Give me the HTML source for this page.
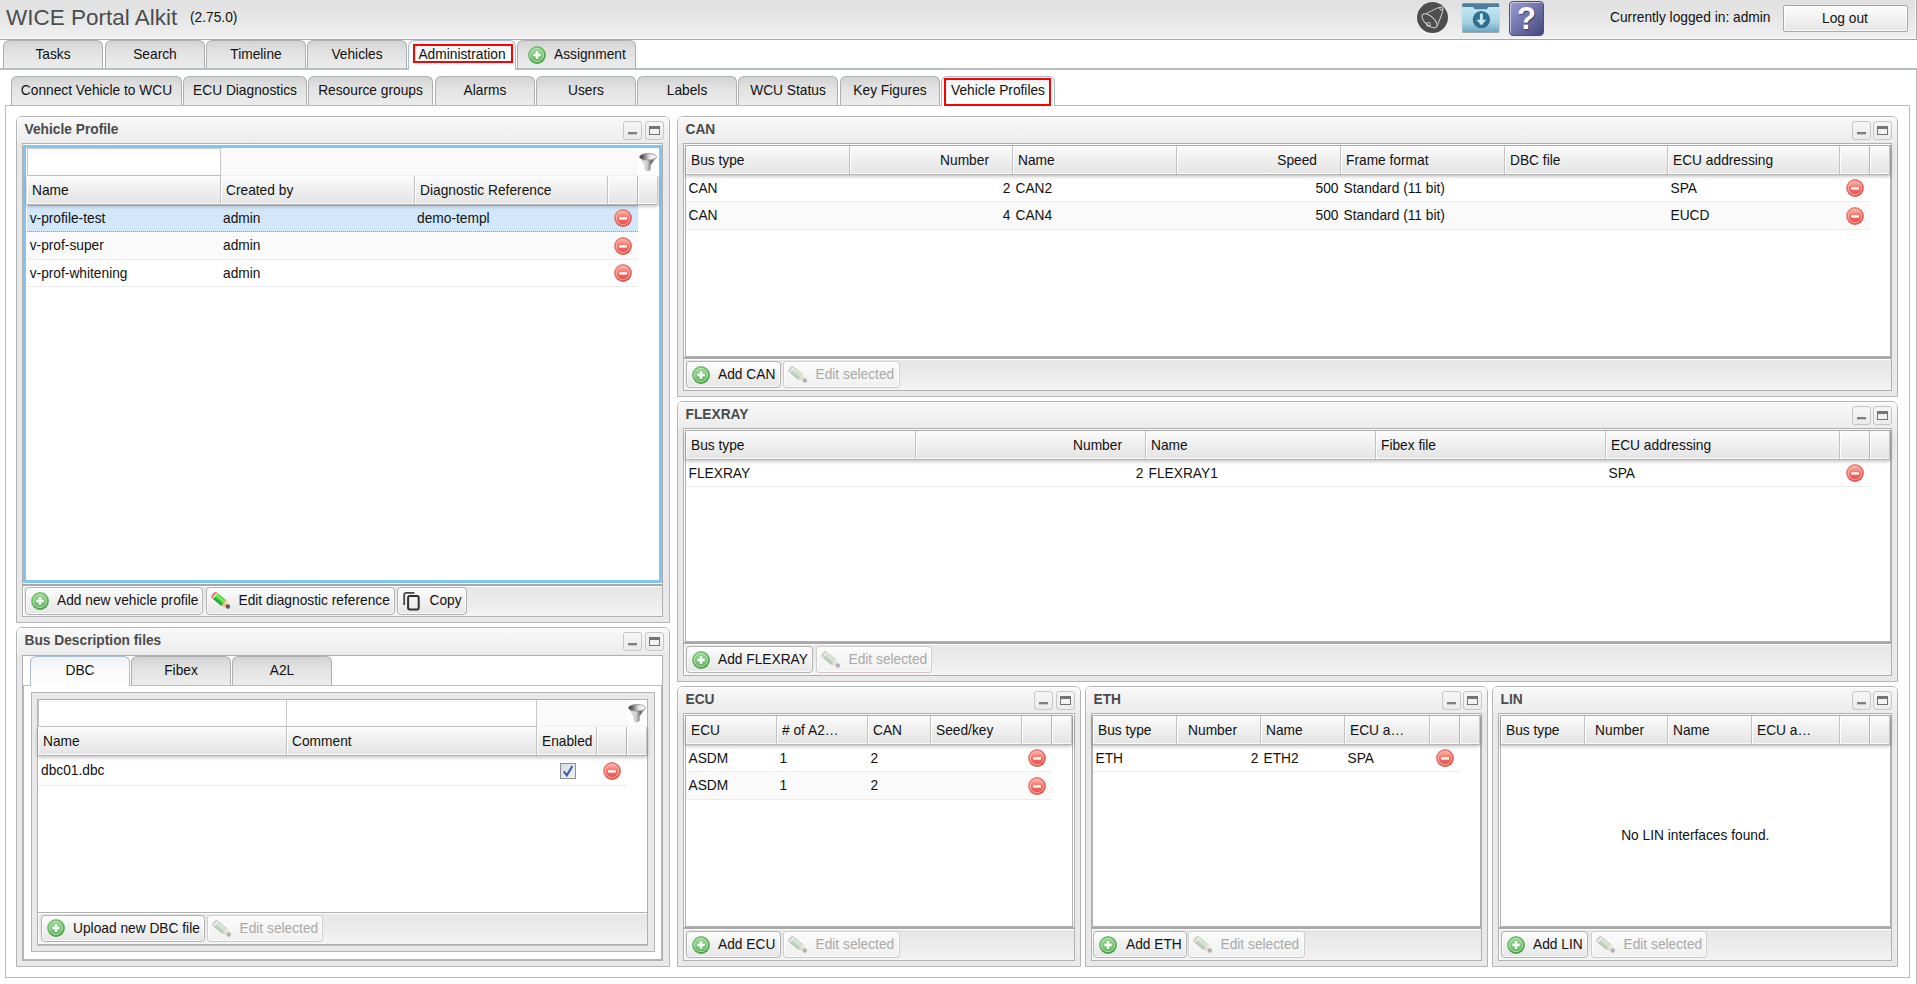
<!DOCTYPE html>
<html lang="en"><head><meta charset="utf-8"><title>WICE Portal Alkit</title>
<style>
*{box-sizing:content-box;margin:0;padding:0}
html,body{width:1917px;height:984px;overflow:hidden;background:#fff}
body{font-family:"Liberation Sans",Arial,Helvetica,sans-serif;font-size:13.75px;line-height:16px;color:#111;position:relative}
div,svg,i,span{position:absolute;display:block}
.t{white-space:pre;height:16px;line-height:16px;z-index:3}
.dt{color:#a9a9a9}
.capt{font-weight:bold;color:#4a4b4c}
.hdr{left:0;top:0;width:1916px;height:39px;background:linear-gradient(#e0e0e0,#e6e6e6 45%,#f1f1f1);border-bottom:1px solid #a8a8a8;border-right:1px solid #a8a8a8;box-shadow:inset -1px -1px 0 #f9f9f9}
.tab{height:28px;border:1px solid #adafb1;border-bottom:0;border-radius:6px 6px 0 0;background:linear-gradient(#d3d3d3,#e2e2e2 40%,#ececec)}
.tab.on{background:linear-gradient(#eff2f4,#fbfbfb 55%,#fff);border-color:#a9bdd0;height:29px}
.panel{border:1px solid #b4b4b4;border-radius:6px 6px 0 0;background:#e9e9e9}
.cap{background:linear-gradient(#f8f8f8,#ececec);border-radius:5px 5px 0 0;box-shadow:inset 0 1px 0 #fff,inset 1px 0 0 #f6f6f6}
.mm{width:17px;height:17px;border:1px solid #c6c6c6;border-radius:3px;background:linear-gradient(#f6f6f6,#ebebeb)}
.btn{border:1px solid #b2b2b2;border-radius:4px;background:linear-gradient(#fdfdfd,#f1f1f1 50%,#e6e6e6);box-shadow:inset 0 0 0 1px rgba(255,255,255,.7)}
.btn.dis{border-color:#d4d0d0 #d4cfcf #d8c4c4;background:linear-gradient(#fbfbfb,#f0f0f0)}
.th{z-index:1;height:27px;background:linear-gradient(#fcfcfc,#f0f0f0 45%,#e5e5e5);box-shadow:0 1px 0 #b4b4b4,0 2px 4px rgba(0,0,0,.30),inset 1px 0 0 #fff;border-bottom:1px solid #fbfbfb}
.sep{z-index:2;width:1px;height:28px;background:#c2c2c2;border-right:1px solid #fff}
.row{background:#fff;border-bottom:1px solid #ececec}
.row.odd{background:#fafafa}
.row.sel{background:#d3e7fb;border-bottom:1px dotted #6f9fdc;box-shadow:inset 0 1px 0 rgba(120,150,200,.35)}
.cbox{border:1px solid #b0b0b0;background:#fff}
.tbar{background:linear-gradient(#e6e6e6,#ececec 60%,#f4f4f4);border-top:2px solid #a8a8a8;box-shadow:inset 0 1px 0 #fff,inset 1px 0 0 #fff}
.tblb{border:1px solid #b0b0b0;background:#fff}
.fld{border:1px solid #c8c8c8;border-top-color:#d2d2d2;background:linear-gradient(#f4f4f4,#fff 3px)}
.ic{overflow:visible}
</style></head>
<body>
<div class="hdr"></div>
<div class="t" style="left:6px;top:5px;font-size:22.5px;line-height:26px;height:26px;color:#494e51">WICE Portal Alkit</div>
<div class="t" style="left:190px;top:10px;">(2.75.0)</div>
<div class="t" style="left:1610px;top:10px;">Currently logged in: admin</div>
<div class="btn" style="left:1783px;top:5px;width:123px;height:25px;border-radius:2px;border-color:#a8a8a8"></div>
<div class="t" style="left:1645px;width:400px;text-align:center;top:11px;">Log out</div>
<svg class="ic" style="left:1416px;top:1px" width="34" height="34" viewBox="0 0 34 34"><circle cx="16.5" cy="16.6" r="16.1" fill="#fff" opacity="0.55"/><circle cx="16.5" cy="16.6" r="15.5" fill="#4d4d4d"/><g fill="none" stroke="#cdcdcd" stroke-width="1.05" stroke-linecap="round"><ellipse cx="13.5" cy="19.8" rx="9.3" ry="4.5" transform="rotate(41 13.5 19.8)"/><path d="M10.6 12.4 C14.5 10.6 19.5 7.2 24.2 6.2"/><path d="M21.4 25.0 C22.4 20.5 26.2 14.5 26.9 8.2"/><circle cx="25.3" cy="7.4" r="1.5"/><circle cx="12.4" cy="23.4" r="1.9"/></g></svg>
<svg class="ic" style="left:1461px;top:2px" width="40" height="32" viewBox="0 0 40 32"><defs><linearGradient id="fo1" x1="0" y1="0" x2="0" y2="1"><stop offset="0" stop-color="#c4e6f3"/><stop offset="0.6" stop-color="#a5d3e5"/><stop offset="1" stop-color="#6fa6bd"/></linearGradient></defs><path d="M2.4 1.2 h34.6 a1.2 1.2 0 0 1 1.2 1.2 V8 H1.2 V2.4 a1.2 1.2 0 0 1 1.2 -1.2z" fill="#4b7f9c"/><path d="M1 5 H11.5 q1 0 1.3 1 q0.4 1.3 1.8 1.3 H25 q1.4 0 1.8 -1.3 q0.3 -1 1.3 -1 H38.6 q0.8 0 0.7 0.8 L38.4 29.2 q-0.1 1 -1.1 1 H2.4 q-1 0 -1.1 -1 L0.3 5.8 Q0.2 5 1 5z" fill="url(#fo1)"/><rect x="1.6" y="29.6" width="36.4" height="1.4" fill="#8e9aa0" opacity="0.7"/><circle cx="20.4" cy="17.6" r="8.7" fill="#2f6f8f"/><path d="M18.9 11.6 h3 v6.2 h3.4 l-4.9 5.6 l-4.9 -5.6 h3.4z" fill="#c6e8f4"/></svg>
<div style="left:1509px;top:1px;width:33px;height:33px;border-radius:4px;border:1px solid #4a4c86;background:linear-gradient(135deg,#9a9cd0,#7476ae 45%,#45477f);box-shadow:inset 1px 1px 0 rgba(255,255,255,.55)"></div>
<div class="t" style="left:1509px;top:1px;width:35px;height:35px;line-height:35px;text-align:center;font-weight:bold;font-size:31px;color:#fff;text-shadow:1px 1px 1px rgba(30,30,80,.6)">?</div>
<div style="left:0;top:68px;width:1917px;height:2px;background:#b7bdc2"></div>
<div class="tab" style="left:3px;top:40px;width:98px;height:27px"></div>
<div class="t" style="left:-147.0px;width:400px;text-align:center;top:47px;">Tasks</div>
<div class="tab" style="left:105px;top:40px;width:98px;height:27px"></div>
<div class="t" style="left:-45.0px;width:400px;text-align:center;top:47px;">Search</div>
<div class="tab" style="left:206px;top:40px;width:98px;height:27px"></div>
<div class="t" style="left:56.0px;width:400px;text-align:center;top:47px;">Timeline</div>
<div class="tab" style="left:307px;top:40px;width:98px;height:27px"></div>
<div class="t" style="left:157.0px;width:400px;text-align:center;top:47px;">Vehicles</div>
<div class="tab on" style="left:408px;top:40px;width:106px"></div>
<div class="t" style="left:262.0px;width:400px;text-align:center;top:47px;">Administration</div>
<div style="left:413px;top:44px;width:96px;height:15px;border:2px solid #f00"></div>
<div class="tab" style="left:517px;top:40px;width:117px;height:27px"></div>
<svg class="ic" style="left:528px;top:46px" width="18" height="18" viewBox="0 0 18 18"><defs><linearGradient id="gp23" x1="0.2" y1="0" x2="0.8" y2="1"><stop offset="0" stop-color="#7ec87a"/><stop offset="1" stop-color="#3f9a3e"/></linearGradient><linearGradient id="gq23" x1="0" y1="0" x2="0" y2="1"><stop offset="0" stop-color="#9ad896"/><stop offset="1" stop-color="#62b65e"/></linearGradient></defs><circle cx="9" cy="9" r="8.9" fill="url(#gp23)"/><circle cx="9" cy="9" r="6.7" fill="url(#gq23)" stroke="#d8f2d4" stroke-opacity="0.75" stroke-width="0.9"/><path d="M9 5.3v7.4M5.3 9h7.4" stroke="#fff" stroke-width="2.5"/></svg>
<div class="t" style="left:554px;top:47px;">Assignment</div>
<div style="left:1916px;top:70px;width:1px;height:914px;background:#b4b8bb"></div>
<div style="left:5px;top:105px;width:1903px;height:871px;border:1px solid #b8babc;background:#fff"></div>
<div class="tab" style="left:11px;top:76px;width:169px"></div>
<div class="t" style="left:-103.5px;width:400px;text-align:center;top:83px;">Connect Vehicle to WCU</div>
<div class="tab" style="left:183px;top:76px;width:122px"></div>
<div class="t" style="left:45.0px;width:400px;text-align:center;top:83px;">ECU Diagnostics</div>
<div class="tab" style="left:308px;top:76px;width:123px"></div>
<div class="t" style="left:170.5px;width:400px;text-align:center;top:83px;">Resource groups</div>
<div class="tab" style="left:435px;top:76px;width:98px"></div>
<div class="t" style="left:285.0px;width:400px;text-align:center;top:83px;">Alarms</div>
<div class="tab" style="left:536px;top:76px;width:98px"></div>
<div class="t" style="left:386.0px;width:400px;text-align:center;top:83px;">Users</div>
<div class="tab" style="left:637px;top:76px;width:98px"></div>
<div class="t" style="left:487.0px;width:400px;text-align:center;top:83px;">Labels</div>
<div class="tab" style="left:738px;top:76px;width:98px"></div>
<div class="t" style="left:588.0px;width:400px;text-align:center;top:83px;">WCU Status</div>
<div class="tab" style="left:840px;top:76px;width:98px"></div>
<div class="t" style="left:690.0px;width:400px;text-align:center;top:83px;">Key Figures</div>
<div class="tab on" style="left:941px;top:76px;width:112px"></div>
<div class="t" style="left:798.0px;width:400px;text-align:center;top:83px;">Vehicle Profiles</div>
<div style="left:944px;top:78px;width:103px;height:24px;border:2px solid #f00"></div>
<div class="panel" style="left:16px;top:116px;width:652px;height:505px;"></div>
<div class="cap" style="left:17px;top:117px;width:652px;height:26px"></div>
<div class="t capt" style="left:24.5px;top:122px;">Vehicle Profile</div>
<div class="mm" style="left:623px;top:121px"><i style="left:4px;top:10px;width:9px;height:2px;background:#7e7e7e;box-shadow:0 1px 0 rgba(126,126,126,.35)"></i></div>
<div class="mm" style="left:645px;top:121px"><i style="left:3px;top:4px;width:9px;height:5px;border:1px solid #727272;border-top:3px solid #747474;background:#f2f2f2"></i></div>
<div class="cbox" style="left:22px;top:143px;width:639px;height:472px;"></div>
<div style="left:23px;top:145px;width:633px;height:432px;border:3px solid #80c6f0;background:#fff"></div>
<div style="left:26px;top:148px;width:612px;height:28px;background:#fafafa"></div>
<div class="fld" style="left:27px;top:148px;width:192px;height:26px"></div>
<div style="left:638px;top:148px;width:21px;height:28px;background:#fff"></div>
<svg class="ic" style="left:639px;top:153px" width="18" height="18" viewBox="0 0 18 18"><defs><linearGradient id="fg56" x1="0" x2="1"><stop offset="0" stop-color="#f4f4f4"/><stop offset="0.45" stop-color="#d0d0d0"/><stop offset="0.7" stop-color="#6c6c6c"/><stop offset="1" stop-color="#8a8a8a"/></linearGradient><linearGradient id="fh56" x1="0" x2="1"><stop offset="0" stop-color="#2e2e2e"/><stop offset="0.25" stop-color="#707070"/><stop offset="0.6" stop-color="#e4e4e4"/><stop offset="1" stop-color="#fdfdfd"/></linearGradient></defs><path d="M0.8 4.2 L6.3 12.4 V16.2 Q6.6 17.8 9 17.8 Q11.2 17.8 11.4 16.4 V12.4 L17.2 4.2 Z" fill="url(#fg56)" stroke="#9a9a9a" stroke-width="0.5"/><ellipse cx="9" cy="3.8" rx="8.5" ry="3.3" fill="url(#fh56)" stroke="#8c8c8c" stroke-width="0.8"/></svg>
<div class="th" style="left:27px;top:176px;width:631px"></div>
<div class="t" style="left:32px;top:183px;width:187px;overflow:hidden;text-overflow:ellipsis;white-space:nowrap;">Name</div>
<div class="sep" style="left:220px;top:176px"></div>
<div class="t" style="left:226px;top:183px;width:187px;overflow:hidden;text-overflow:ellipsis;white-space:nowrap;">Created by</div>
<div class="sep" style="left:414px;top:176px"></div>
<div class="t" style="left:420px;top:183px;width:186px;overflow:hidden;text-overflow:ellipsis;white-space:nowrap;">Diagnostic Reference</div>
<div class="sep" style="left:607px;top:176px"></div>
<div class="sep" style="left:637px;top:176px;background:#b4b4b4"></div>
<div class="sep" style="left:657px;top:176px;border-right:0;background:#c8c8c8"></div>
<div class="row sel" style="left:27px;top:205px;width:611px;height:26px"></div>
<div class="row odd" style="left:27px;top:232px;width:611px;height:27px"></div>
<div class="row" style="left:27px;top:260px;width:611px;height:26px"></div>
<div class="t" style="left:29.7px;top:211px;">v-profile-test</div>
<div class="t" style="left:223px;top:211px;">admin</div>
<div class="t" style="left:417px;top:211px;">demo-templ</div>
<svg class="ic" style="left:614px;top:209px" width="18" height="18" viewBox="0 0 18 18"><defs><linearGradient id="gm72" x1="0.2" y1="0" x2="0.8" y2="1"><stop offset="0" stop-color="#f08680"/><stop offset="1" stop-color="#dc4e48"/></linearGradient><linearGradient id="gn72" x1="0" y1="0" x2="0" y2="1"><stop offset="0" stop-color="#ffb2a2"/><stop offset="0.5" stop-color="#f66e64"/><stop offset="1" stop-color="#ee4e48"/></linearGradient></defs><circle cx="9" cy="9" r="8.9" fill="url(#gm72)"/><circle cx="9" cy="9" r="6.7" fill="url(#gn72)" stroke="#ffd8d2" stroke-opacity="0.75" stroke-width="0.9"/><path d="M5.1 9.4h7.8" stroke="#fff" stroke-width="2.4"/></svg>
<div class="t" style="left:29.7px;top:238px;">v-prof-super</div>
<div class="t" style="left:223px;top:238px;">admin</div>
<svg class="ic" style="left:614px;top:237px" width="18" height="18" viewBox="0 0 18 18"><defs><linearGradient id="gm75" x1="0.2" y1="0" x2="0.8" y2="1"><stop offset="0" stop-color="#f08680"/><stop offset="1" stop-color="#dc4e48"/></linearGradient><linearGradient id="gn75" x1="0" y1="0" x2="0" y2="1"><stop offset="0" stop-color="#ffb2a2"/><stop offset="0.5" stop-color="#f66e64"/><stop offset="1" stop-color="#ee4e48"/></linearGradient></defs><circle cx="9" cy="9" r="8.9" fill="url(#gm75)"/><circle cx="9" cy="9" r="6.7" fill="url(#gn75)" stroke="#ffd8d2" stroke-opacity="0.75" stroke-width="0.9"/><path d="M5.1 9.4h7.8" stroke="#fff" stroke-width="2.4"/></svg>
<div class="t" style="left:29.7px;top:266px;">v-prof-whitening</div>
<div class="t" style="left:223px;top:266px;">admin</div>
<svg class="ic" style="left:614px;top:264px" width="18" height="18" viewBox="0 0 18 18"><defs><linearGradient id="gm78" x1="0.2" y1="0" x2="0.8" y2="1"><stop offset="0" stop-color="#f08680"/><stop offset="1" stop-color="#dc4e48"/></linearGradient><linearGradient id="gn78" x1="0" y1="0" x2="0" y2="1"><stop offset="0" stop-color="#ffb2a2"/><stop offset="0.5" stop-color="#f66e64"/><stop offset="1" stop-color="#ee4e48"/></linearGradient></defs><circle cx="9" cy="9" r="8.9" fill="url(#gm78)"/><circle cx="9" cy="9" r="6.7" fill="url(#gn78)" stroke="#ffd8d2" stroke-opacity="0.75" stroke-width="0.9"/><path d="M5.1 9.4h7.8" stroke="#fff" stroke-width="2.4"/></svg>
<div class="tbar" style="left:23px;top:584px;width:639px;height:30px"></div>
<div class="btn" style="left:25px;top:587px;width:176px;height:26px"></div>
<svg class="ic" style="left:31px;top:592px" width="18" height="18" viewBox="0 0 18 18"><defs><linearGradient id="gp81" x1="0.2" y1="0" x2="0.8" y2="1"><stop offset="0" stop-color="#7ec87a"/><stop offset="1" stop-color="#3f9a3e"/></linearGradient><linearGradient id="gq81" x1="0" y1="0" x2="0" y2="1"><stop offset="0" stop-color="#9ad896"/><stop offset="1" stop-color="#62b65e"/></linearGradient></defs><circle cx="9" cy="9" r="8.9" fill="url(#gp81)"/><circle cx="9" cy="9" r="6.7" fill="url(#gq81)" stroke="#d8f2d4" stroke-opacity="0.75" stroke-width="0.9"/><path d="M9 5.3v7.4M5.3 9h7.4" stroke="#fff" stroke-width="2.5"/></svg>
<div class="t" style="left:57px;top:593px;">Add new vehicle profile</div>
<div class="btn" style="left:206px;top:587px;width:187px;height:26px"></div>
<svg class="ic" style="left:212px;top:592px" width="20" height="20" viewBox="0 0 20 20"><defs><linearGradient id="pg84" x1="0" y1="0" x2="0" y2="1"><stop offset="0" stop-color="#3fc23a"/><stop offset="0.3" stop-color="#86f266"/><stop offset="0.6" stop-color="#3cc83c"/><stop offset="1" stop-color="#169a1c"/></linearGradient></defs><g transform="translate(2.0,3.0) rotate(39.6)"><ellipse cx="0.4" cy="0" rx="2.1" ry="3.8" fill="#e9705f"/><ellipse cx="1.7" cy="0" rx="1.3" ry="3.3" fill="#f4f4ec"/><rect x="1.7" y="-3.7" width="11" height="7.4" fill="url(#pg84)"/><path d="M12.7 -3.7 L17.4 -1.9 V1.9 L12.7 3.7 Z" fill="#f9b886"/><path d="M12.7 -3.7 L17.4 -1.9 L17.4 -0.2 L12.7 -1 Z" fill="#fdd2a4"/><circle cx="18.0" cy="0" r="2.2" fill="#5a5a5a"/></g></svg>
<div class="t" style="left:238.5px;top:593px;">Edit diagnostic reference</div>
<div class="btn" style="left:397px;top:587px;width:68px;height:26px"></div>
<svg class="ic" style="left:402px;top:591px" width="18" height="20" viewBox="0 0 18 20"><path d="M2.2 13.9V3.4a1.6 1.6 0 0 1 1.6-1.6h8.6" fill="none" stroke="#454545" stroke-width="1.8"/><rect x="6.1" y="5.0" width="10.6" height="13.4" rx="1.6" fill="none" stroke="#303030" stroke-width="2"/></svg>
<div class="t" style="left:429.5px;top:593px;">Copy</div>
<div class="panel" style="left:16px;top:627px;width:652px;height:338px;"></div>
<div class="cap" style="left:17px;top:628px;width:652px;height:26px"></div>
<div class="t capt" style="left:24.5px;top:633px;">Bus Description files</div>
<div class="mm" style="left:623px;top:632px"><i style="left:4px;top:10px;width:9px;height:2px;background:#7e7e7e;box-shadow:0 1px 0 rgba(126,126,126,.35)"></i></div>
<div class="mm" style="left:645px;top:632px"><i style="left:3px;top:4px;width:9px;height:5px;border:1px solid #727272;border-top:3px solid #747474;background:#f2f2f2"></i></div>
<div class="cbox" style="left:22px;top:655px;width:639px;height:304px;"></div>
<div style="left:23px;top:685px;width:637px;height:273px;border:1px solid #b8b8b8;border-top-color:#b9bec3"></div>
<div class="tab on" style="left:30px;top:656px;width:98px"></div>
<div class="t" style="left:-120.0px;width:400px;text-align:center;top:663px;">DBC</div>
<div class="tab" style="left:131px;top:656px;width:98px"></div>
<div class="t" style="left:-19.0px;width:400px;text-align:center;top:663px;">Fibex</div>
<div class="tab" style="left:232px;top:656px;width:98px"></div>
<div class="t" style="left:82.0px;width:400px;text-align:center;top:663px;">A2L</div>
<div style="left:31px;top:692px;width:622px;height:258px;border:1px solid #b4b4b4;background:#e9e9e9"></div>
<div style="left:37px;top:699px;width:611px;height:246px;border:1px solid #b0b0b0;background:#fff;box-sizing:border-box;box-shadow:0 1px 0 #bdbdbd"></div>
<div style="left:38px;top:700px;width:608px;height:27px;background:#fafafa"></div>
<div class="fld" style="left:38px;top:700px;width:247px;height:26px;border-top:0"></div>
<div class="fld" style="left:287px;top:700px;width:249px;height:26px;border-left:0;border-top:0"></div>
<div style="left:627px;top:700px;width:20px;height:27px;background:#fff"></div>
<svg class="ic" style="left:628px;top:704px" width="18" height="18" viewBox="0 0 18 18"><defs><linearGradient id="fg108" x1="0" x2="1"><stop offset="0" stop-color="#f4f4f4"/><stop offset="0.45" stop-color="#d0d0d0"/><stop offset="0.7" stop-color="#6c6c6c"/><stop offset="1" stop-color="#8a8a8a"/></linearGradient><linearGradient id="fh108" x1="0" x2="1"><stop offset="0" stop-color="#2e2e2e"/><stop offset="0.25" stop-color="#707070"/><stop offset="0.6" stop-color="#e4e4e4"/><stop offset="1" stop-color="#fdfdfd"/></linearGradient></defs><path d="M0.8 4.2 L6.3 12.4 V16.2 Q6.6 17.8 9 17.8 Q11.2 17.8 11.4 16.4 V12.4 L17.2 4.2 Z" fill="url(#fg108)" stroke="#9a9a9a" stroke-width="0.5"/><ellipse cx="9" cy="3.8" rx="8.5" ry="3.3" fill="url(#fh108)" stroke="#8c8c8c" stroke-width="0.8"/></svg>
<div class="th" style="left:38px;top:727px;width:609px"></div>
<div class="t" style="left:43px;top:734px;width:242px;overflow:hidden;text-overflow:ellipsis;white-space:nowrap;">Name</div>
<div class="sep" style="left:286px;top:727px"></div>
<div class="t" style="left:292px;top:734px;width:243px;overflow:hidden;text-overflow:ellipsis;white-space:nowrap;">Comment</div>
<div class="sep" style="left:536px;top:727px"></div>
<div class="t" style="left:542px;top:734px;width:53px;overflow:hidden;text-overflow:ellipsis;white-space:nowrap;">Enabled</div>
<div class="sep" style="left:596px;top:727px"></div>
<div class="sep" style="left:626px;top:727px;background:#b4b4b4"></div>
<div class="sep" style="left:646px;top:727px;border-right:0;background:#c8c8c8"></div>
<div class="row" style="left:38px;top:756px;width:589px;height:29px"></div>
<div class="t" style="left:41px;top:763px;">dbc01.dbc</div>
<div style="left:560px;top:763px;width:14px;height:14px;border:1px solid #8e8f8f;background:linear-gradient(135deg,#d8dde5,#eef0f4);"></div>
<svg class="ic" style="left:560px;top:763px" width="16" height="16" viewBox="0 0 16 16"><path d="M3.8 8.4 L6.8 12.4 L12.4 3.0" fill="none" stroke="#3c5fae" stroke-width="2.1"/></svg>
<svg class="ic" style="left:603px;top:762px" width="18" height="18" viewBox="0 0 18 18"><defs><linearGradient id="gm122" x1="0.2" y1="0" x2="0.8" y2="1"><stop offset="0" stop-color="#f08680"/><stop offset="1" stop-color="#dc4e48"/></linearGradient><linearGradient id="gn122" x1="0" y1="0" x2="0" y2="1"><stop offset="0" stop-color="#ffb2a2"/><stop offset="0.5" stop-color="#f66e64"/><stop offset="1" stop-color="#ee4e48"/></linearGradient></defs><circle cx="9" cy="9" r="8.9" fill="url(#gm122)"/><circle cx="9" cy="9" r="6.7" fill="url(#gn122)" stroke="#ffd8d2" stroke-opacity="0.75" stroke-width="0.9"/><path d="M5.1 9.4h7.8" stroke="#fff" stroke-width="2.4"/></svg>
<div class="tbar" style="left:38px;top:912px;width:609px;height:31px;border-top-width:1px;border-top-color:#b0b0b0"></div>
<div class="btn" style="left:41px;top:915px;width:162px;height:25px"></div>
<svg class="ic" style="left:47px;top:919px" width="18" height="18" viewBox="0 0 18 18"><defs><linearGradient id="gp125" x1="0.2" y1="0" x2="0.8" y2="1"><stop offset="0" stop-color="#7ec87a"/><stop offset="1" stop-color="#3f9a3e"/></linearGradient><linearGradient id="gq125" x1="0" y1="0" x2="0" y2="1"><stop offset="0" stop-color="#9ad896"/><stop offset="1" stop-color="#62b65e"/></linearGradient></defs><circle cx="9" cy="9" r="8.9" fill="url(#gp125)"/><circle cx="9" cy="9" r="6.7" fill="url(#gq125)" stroke="#d8f2d4" stroke-opacity="0.75" stroke-width="0.9"/><path d="M9 5.3v7.4M5.3 9h7.4" stroke="#fff" stroke-width="2.5"/></svg>
<div class="t" style="left:73px;top:921px;">Upload new DBC file</div>
<div class="btn dis" style="left:207px;top:915px;width:114px;height:25px"></div>
<svg class="ic" style="left:213px;top:920px" width="20" height="20" viewBox="0 0 20 20"><defs><linearGradient id="pg128" x1="0" y1="0" x2="0" y2="1"><stop offset="0" stop-color="#3fc23a"/><stop offset="0.3" stop-color="#86f266"/><stop offset="0.6" stop-color="#3cc83c"/><stop offset="1" stop-color="#169a1c"/></linearGradient></defs><g opacity="0.42" style="filter:saturate(0.35)" transform="translate(2.0,3.0) rotate(39.6)"><ellipse cx="0.4" cy="0" rx="2.1" ry="3.8" fill="#e9705f"/><ellipse cx="1.7" cy="0" rx="1.3" ry="3.3" fill="#f4f4ec"/><rect x="1.7" y="-3.7" width="11" height="7.4" fill="url(#pg128)"/><path d="M12.7 -3.7 L17.4 -1.9 V1.9 L12.7 3.7 Z" fill="#f9b886"/><path d="M12.7 -3.7 L17.4 -1.9 L17.4 -0.2 L12.7 -1 Z" fill="#fdd2a4"/><circle cx="18.0" cy="0" r="2.2" fill="#5a5a5a"/></g></svg>
<div class="t dt" style="left:239.5px;top:921px;">Edit selected</div>
<div class="panel" style="left:677px;top:116px;width:1219px;height:279px;"></div>
<div class="cap" style="left:678px;top:117px;width:1219px;height:26px"></div>
<div class="t capt" style="left:685.5px;top:122px;">CAN</div>
<div class="mm" style="left:1852px;top:121px"><i style="left:4px;top:10px;width:9px;height:2px;background:#7e7e7e;box-shadow:0 1px 0 rgba(126,126,126,.35)"></i></div>
<div class="mm" style="left:1873px;top:121px"><i style="left:3px;top:4px;width:9px;height:5px;border:1px solid #727272;border-top:3px solid #747474;background:#f2f2f2"></i></div>
<div class="cbox" style="left:683px;top:143px;width:1207px;height:246px"></div>
<div class="tblb" style="left:685px;top:145px;width:1204px;height:210px"></div>
<div class="th" style="left:686px;top:146px;width:1204px"></div>
<div class="t" style="left:691px;top:153px;width:157px;overflow:hidden;text-overflow:ellipsis;white-space:nowrap;">Bus type</div>
<div class="sep" style="left:849px;top:146px"></div>
<div class="t" style="left:589px;width:400px;text-align:right;top:153px;">Number</div>
<div class="sep" style="left:1012px;top:146px"></div>
<div class="t" style="left:1018px;top:153px;width:157px;overflow:hidden;text-overflow:ellipsis;white-space:nowrap;">Name</div>
<div class="sep" style="left:1176px;top:146px"></div>
<div class="t" style="left:917px;width:400px;text-align:right;top:153px;">Speed</div>
<div class="sep" style="left:1340px;top:146px"></div>
<div class="t" style="left:1346px;top:153px;width:157px;overflow:hidden;text-overflow:ellipsis;white-space:nowrap;">Frame format</div>
<div class="sep" style="left:1504px;top:146px"></div>
<div class="t" style="left:1510px;top:153px;width:156px;overflow:hidden;text-overflow:ellipsis;white-space:nowrap;">DBC file</div>
<div class="sep" style="left:1667px;top:146px"></div>
<div class="t" style="left:1673px;top:153px;width:165px;overflow:hidden;text-overflow:ellipsis;white-space:nowrap;">ECU addressing</div>
<div class="sep" style="left:1839px;top:146px"></div>
<div class="sep" style="left:1869px;top:146px;background:#b4b4b4"></div>
<div class="sep" style="left:1889px;top:146px;border-right:0;background:#c8c8c8"></div>
<div class="row" style="left:686px;top:175px;width:1184px;height:26px"></div>
<div class="row odd" style="left:686px;top:202px;width:1184px;height:27px"></div>
<div class="t" style="left:688.5px;top:181px;">CAN</div>
<div class="t" style="left:610.5px;width:400px;text-align:right;top:181px;">2</div>
<div class="t" style="left:1015.5px;top:181px;">CAN2</div>
<div class="t" style="left:938.5px;width:400px;text-align:right;top:181px;">500</div>
<div class="t" style="left:1343.5px;top:181px;">Standard (11 bit)</div>
<div class="t" style="left:1670.5px;top:181px;">SPA</div>
<svg class="ic" style="left:1846px;top:179px" width="18" height="18" viewBox="0 0 18 18"><defs><linearGradient id="gm162" x1="0.2" y1="0" x2="0.8" y2="1"><stop offset="0" stop-color="#f08680"/><stop offset="1" stop-color="#dc4e48"/></linearGradient><linearGradient id="gn162" x1="0" y1="0" x2="0" y2="1"><stop offset="0" stop-color="#ffb2a2"/><stop offset="0.5" stop-color="#f66e64"/><stop offset="1" stop-color="#ee4e48"/></linearGradient></defs><circle cx="9" cy="9" r="8.9" fill="url(#gm162)"/><circle cx="9" cy="9" r="6.7" fill="url(#gn162)" stroke="#ffd8d2" stroke-opacity="0.75" stroke-width="0.9"/><path d="M5.1 9.4h7.8" stroke="#fff" stroke-width="2.4"/></svg>
<div class="t" style="left:688.5px;top:208px;">CAN</div>
<div class="t" style="left:610.5px;width:400px;text-align:right;top:208px;">4</div>
<div class="t" style="left:1015.5px;top:208px;">CAN4</div>
<div class="t" style="left:938.5px;width:400px;text-align:right;top:208px;">500</div>
<div class="t" style="left:1343.5px;top:208px;">Standard (11 bit)</div>
<div class="t" style="left:1670.5px;top:208px;">EUCD</div>
<svg class="ic" style="left:1846px;top:207px" width="18" height="18" viewBox="0 0 18 18"><defs><linearGradient id="gm169" x1="0.2" y1="0" x2="0.8" y2="1"><stop offset="0" stop-color="#f08680"/><stop offset="1" stop-color="#dc4e48"/></linearGradient><linearGradient id="gn169" x1="0" y1="0" x2="0" y2="1"><stop offset="0" stop-color="#ffb2a2"/><stop offset="0.5" stop-color="#f66e64"/><stop offset="1" stop-color="#ee4e48"/></linearGradient></defs><circle cx="9" cy="9" r="8.9" fill="url(#gm169)"/><circle cx="9" cy="9" r="6.7" fill="url(#gn169)" stroke="#ffd8d2" stroke-opacity="0.75" stroke-width="0.9"/><path d="M5.1 9.4h7.8" stroke="#fff" stroke-width="2.4"/></svg>
<div class="tbar" style="left:684px;top:357px;width:1207px;height:31px"></div>
<div class="btn" style="left:686px;top:361px;width:93px;height:25px"></div>
<svg class="ic" style="left:692px;top:366px" width="18" height="18" viewBox="0 0 18 18"><defs><linearGradient id="gp172" x1="0.2" y1="0" x2="0.8" y2="1"><stop offset="0" stop-color="#7ec87a"/><stop offset="1" stop-color="#3f9a3e"/></linearGradient><linearGradient id="gq172" x1="0" y1="0" x2="0" y2="1"><stop offset="0" stop-color="#9ad896"/><stop offset="1" stop-color="#62b65e"/></linearGradient></defs><circle cx="9" cy="9" r="8.9" fill="url(#gp172)"/><circle cx="9" cy="9" r="6.7" fill="url(#gq172)" stroke="#d8f2d4" stroke-opacity="0.75" stroke-width="0.9"/><path d="M9 5.3v7.4M5.3 9h7.4" stroke="#fff" stroke-width="2.5"/></svg>
<div class="t" style="left:718px;top:367px;">Add CAN</div>
<div class="btn dis" style="left:783px;top:361px;width:115px;height:25px"></div>
<svg class="ic" style="left:789px;top:366px" width="20" height="20" viewBox="0 0 20 20"><defs><linearGradient id="pg175" x1="0" y1="0" x2="0" y2="1"><stop offset="0" stop-color="#3fc23a"/><stop offset="0.3" stop-color="#86f266"/><stop offset="0.6" stop-color="#3cc83c"/><stop offset="1" stop-color="#169a1c"/></linearGradient></defs><g opacity="0.42" style="filter:saturate(0.35)" transform="translate(2.0,3.0) rotate(39.6)"><ellipse cx="0.4" cy="0" rx="2.1" ry="3.8" fill="#e9705f"/><ellipse cx="1.7" cy="0" rx="1.3" ry="3.3" fill="#f4f4ec"/><rect x="1.7" y="-3.7" width="11" height="7.4" fill="url(#pg175)"/><path d="M12.7 -3.7 L17.4 -1.9 V1.9 L12.7 3.7 Z" fill="#f9b886"/><path d="M12.7 -3.7 L17.4 -1.9 L17.4 -0.2 L12.7 -1 Z" fill="#fdd2a4"/><circle cx="18.0" cy="0" r="2.2" fill="#5a5a5a"/></g></svg>
<div class="t dt" style="left:815.5px;top:367px;">Edit selected</div>
<div class="panel" style="left:677px;top:401px;width:1219px;height:279px;"></div>
<div class="cap" style="left:678px;top:402px;width:1219px;height:26px"></div>
<div class="t capt" style="left:685.5px;top:407px;">FLEXRAY</div>
<div class="mm" style="left:1852px;top:406px"><i style="left:4px;top:10px;width:9px;height:2px;background:#7e7e7e;box-shadow:0 1px 0 rgba(126,126,126,.35)"></i></div>
<div class="mm" style="left:1873px;top:406px"><i style="left:3px;top:4px;width:9px;height:5px;border:1px solid #727272;border-top:3px solid #747474;background:#f2f2f2"></i></div>
<div class="cbox" style="left:683px;top:428px;width:1207px;height:246px"></div>
<div class="tblb" style="left:685px;top:430px;width:1204px;height:210px"></div>
<div class="th" style="left:686px;top:431px;width:1204px"></div>
<div class="t" style="left:691px;top:438px;width:223px;overflow:hidden;text-overflow:ellipsis;white-space:nowrap;">Bus type</div>
<div class="sep" style="left:915px;top:431px"></div>
<div class="t" style="left:722px;width:400px;text-align:right;top:438px;">Number</div>
<div class="sep" style="left:1145px;top:431px"></div>
<div class="t" style="left:1151px;top:438px;width:223px;overflow:hidden;text-overflow:ellipsis;white-space:nowrap;">Name</div>
<div class="sep" style="left:1375px;top:431px"></div>
<div class="t" style="left:1381px;top:438px;width:223px;overflow:hidden;text-overflow:ellipsis;white-space:nowrap;">Fibex file</div>
<div class="sep" style="left:1605px;top:431px"></div>
<div class="t" style="left:1611px;top:438px;width:227px;overflow:hidden;text-overflow:ellipsis;white-space:nowrap;">ECU addressing</div>
<div class="sep" style="left:1839px;top:431px"></div>
<div class="sep" style="left:1869px;top:431px;background:#b4b4b4"></div>
<div class="sep" style="left:1889px;top:431px;border-right:0;background:#c8c8c8"></div>
<div class="row" style="left:686px;top:460px;width:1184px;height:26px"></div>
<div class="t" style="left:688.5px;top:466px;">FLEXRAY</div>
<div class="t" style="left:743.5px;width:400px;text-align:right;top:466px;">2</div>
<div class="t" style="left:1148.5px;top:466px;">FLEXRAY1</div>
<div class="t" style="left:1608.5px;top:466px;">SPA</div>
<svg class="ic" style="left:1846px;top:464px" width="18" height="18" viewBox="0 0 18 18"><defs><linearGradient id="gm202" x1="0.2" y1="0" x2="0.8" y2="1"><stop offset="0" stop-color="#f08680"/><stop offset="1" stop-color="#dc4e48"/></linearGradient><linearGradient id="gn202" x1="0" y1="0" x2="0" y2="1"><stop offset="0" stop-color="#ffb2a2"/><stop offset="0.5" stop-color="#f66e64"/><stop offset="1" stop-color="#ee4e48"/></linearGradient></defs><circle cx="9" cy="9" r="8.9" fill="url(#gm202)"/><circle cx="9" cy="9" r="6.7" fill="url(#gn202)" stroke="#ffd8d2" stroke-opacity="0.75" stroke-width="0.9"/><path d="M5.1 9.4h7.8" stroke="#fff" stroke-width="2.4"/></svg>
<div class="tbar" style="left:684px;top:642px;width:1207px;height:31px"></div>
<div class="btn" style="left:686px;top:646px;width:125px;height:25px"></div>
<svg class="ic" style="left:692px;top:651px" width="18" height="18" viewBox="0 0 18 18"><defs><linearGradient id="gp205" x1="0.2" y1="0" x2="0.8" y2="1"><stop offset="0" stop-color="#7ec87a"/><stop offset="1" stop-color="#3f9a3e"/></linearGradient><linearGradient id="gq205" x1="0" y1="0" x2="0" y2="1"><stop offset="0" stop-color="#9ad896"/><stop offset="1" stop-color="#62b65e"/></linearGradient></defs><circle cx="9" cy="9" r="8.9" fill="url(#gp205)"/><circle cx="9" cy="9" r="6.7" fill="url(#gq205)" stroke="#d8f2d4" stroke-opacity="0.75" stroke-width="0.9"/><path d="M9 5.3v7.4M5.3 9h7.4" stroke="#fff" stroke-width="2.5"/></svg>
<div class="t" style="left:718px;top:652px;">Add FLEXRAY</div>
<div class="btn dis" style="left:816px;top:646px;width:114px;height:25px"></div>
<svg class="ic" style="left:822px;top:651px" width="20" height="20" viewBox="0 0 20 20"><defs><linearGradient id="pg208" x1="0" y1="0" x2="0" y2="1"><stop offset="0" stop-color="#3fc23a"/><stop offset="0.3" stop-color="#86f266"/><stop offset="0.6" stop-color="#3cc83c"/><stop offset="1" stop-color="#169a1c"/></linearGradient></defs><g opacity="0.42" style="filter:saturate(0.35)" transform="translate(2.0,3.0) rotate(39.6)"><ellipse cx="0.4" cy="0" rx="2.1" ry="3.8" fill="#e9705f"/><ellipse cx="1.7" cy="0" rx="1.3" ry="3.3" fill="#f4f4ec"/><rect x="1.7" y="-3.7" width="11" height="7.4" fill="url(#pg208)"/><path d="M12.7 -3.7 L17.4 -1.9 V1.9 L12.7 3.7 Z" fill="#f9b886"/><path d="M12.7 -3.7 L17.4 -1.9 L17.4 -0.2 L12.7 -1 Z" fill="#fdd2a4"/><circle cx="18.0" cy="0" r="2.2" fill="#5a5a5a"/></g></svg>
<div class="t dt" style="left:848.5px;top:652px;">Edit selected</div>
<div class="panel" style="left:677px;top:686px;width:402px;height:279px;"></div>
<div class="cap" style="left:678px;top:687px;width:402px;height:26px"></div>
<div class="t capt" style="left:685.5px;top:692px;">ECU</div>
<div class="mm" style="left:1034px;top:691px"><i style="left:4px;top:10px;width:9px;height:2px;background:#7e7e7e;box-shadow:0 1px 0 rgba(126,126,126,.35)"></i></div>
<div class="mm" style="left:1056px;top:691px"><i style="left:3px;top:4px;width:9px;height:5px;border:1px solid #727272;border-top:3px solid #747474;background:#f2f2f2"></i></div>
<div class="cbox" style="left:683px;top:713px;width:390px;height:246px"></div>
<div class="tblb" style="left:685px;top:715px;width:386px;height:210px"></div>
<div class="th" style="left:686px;top:716px;width:386px"></div>
<div class="t" style="left:691px;top:723px;width:84px;overflow:hidden;text-overflow:ellipsis;white-space:nowrap;">ECU</div>
<div class="sep" style="left:776px;top:716px"></div>
<div class="t" style="left:782px;top:723px;width:84px;overflow:hidden;text-overflow:ellipsis;white-space:nowrap;"># of A2…</div>
<div class="sep" style="left:867px;top:716px"></div>
<div class="t" style="left:873px;top:723px;width:56px;overflow:hidden;text-overflow:ellipsis;white-space:nowrap;">CAN</div>
<div class="sep" style="left:930px;top:716px"></div>
<div class="t" style="left:936px;top:723px;width:84px;overflow:hidden;text-overflow:ellipsis;white-space:nowrap;">Seed/key</div>
<div class="sep" style="left:1021px;top:716px"></div>
<div class="sep" style="left:1051px;top:716px;background:#b4b4b4"></div>
<div class="sep" style="left:1071px;top:716px;border-right:0;background:#c8c8c8"></div>
<div class="row" style="left:686px;top:745px;width:366px;height:26px"></div>
<div class="row odd" style="left:686px;top:772px;width:366px;height:27px"></div>
<div class="t" style="left:688.5px;top:751px;">ASDM</div>
<div class="t" style="left:779.5px;top:751px;">1</div>
<div class="t" style="left:870.5px;top:751px;">2</div>
<svg class="ic" style="left:1028px;top:749px" width="18" height="18" viewBox="0 0 18 18"><defs><linearGradient id="gm233" x1="0.2" y1="0" x2="0.8" y2="1"><stop offset="0" stop-color="#f08680"/><stop offset="1" stop-color="#dc4e48"/></linearGradient><linearGradient id="gn233" x1="0" y1="0" x2="0" y2="1"><stop offset="0" stop-color="#ffb2a2"/><stop offset="0.5" stop-color="#f66e64"/><stop offset="1" stop-color="#ee4e48"/></linearGradient></defs><circle cx="9" cy="9" r="8.9" fill="url(#gm233)"/><circle cx="9" cy="9" r="6.7" fill="url(#gn233)" stroke="#ffd8d2" stroke-opacity="0.75" stroke-width="0.9"/><path d="M5.1 9.4h7.8" stroke="#fff" stroke-width="2.4"/></svg>
<div class="t" style="left:688.5px;top:778px;">ASDM</div>
<div class="t" style="left:779.5px;top:778px;">1</div>
<div class="t" style="left:870.5px;top:778px;">2</div>
<svg class="ic" style="left:1028px;top:777px" width="18" height="18" viewBox="0 0 18 18"><defs><linearGradient id="gm237" x1="0.2" y1="0" x2="0.8" y2="1"><stop offset="0" stop-color="#f08680"/><stop offset="1" stop-color="#dc4e48"/></linearGradient><linearGradient id="gn237" x1="0" y1="0" x2="0" y2="1"><stop offset="0" stop-color="#ffb2a2"/><stop offset="0.5" stop-color="#f66e64"/><stop offset="1" stop-color="#ee4e48"/></linearGradient></defs><circle cx="9" cy="9" r="8.9" fill="url(#gm237)"/><circle cx="9" cy="9" r="6.7" fill="url(#gn237)" stroke="#ffd8d2" stroke-opacity="0.75" stroke-width="0.9"/><path d="M5.1 9.4h7.8" stroke="#fff" stroke-width="2.4"/></svg>
<div class="tbar" style="left:684px;top:927px;width:390px;height:31px"></div>
<div class="btn" style="left:686px;top:931px;width:93px;height:25px"></div>
<svg class="ic" style="left:692px;top:936px" width="18" height="18" viewBox="0 0 18 18"><defs><linearGradient id="gp240" x1="0.2" y1="0" x2="0.8" y2="1"><stop offset="0" stop-color="#7ec87a"/><stop offset="1" stop-color="#3f9a3e"/></linearGradient><linearGradient id="gq240" x1="0" y1="0" x2="0" y2="1"><stop offset="0" stop-color="#9ad896"/><stop offset="1" stop-color="#62b65e"/></linearGradient></defs><circle cx="9" cy="9" r="8.9" fill="url(#gp240)"/><circle cx="9" cy="9" r="6.7" fill="url(#gq240)" stroke="#d8f2d4" stroke-opacity="0.75" stroke-width="0.9"/><path d="M9 5.3v7.4M5.3 9h7.4" stroke="#fff" stroke-width="2.5"/></svg>
<div class="t" style="left:718px;top:937px;">Add ECU</div>
<div class="btn dis" style="left:783px;top:931px;width:115px;height:25px"></div>
<svg class="ic" style="left:789px;top:936px" width="20" height="20" viewBox="0 0 20 20"><defs><linearGradient id="pg243" x1="0" y1="0" x2="0" y2="1"><stop offset="0" stop-color="#3fc23a"/><stop offset="0.3" stop-color="#86f266"/><stop offset="0.6" stop-color="#3cc83c"/><stop offset="1" stop-color="#169a1c"/></linearGradient></defs><g opacity="0.42" style="filter:saturate(0.35)" transform="translate(2.0,3.0) rotate(39.6)"><ellipse cx="0.4" cy="0" rx="2.1" ry="3.8" fill="#e9705f"/><ellipse cx="1.7" cy="0" rx="1.3" ry="3.3" fill="#f4f4ec"/><rect x="1.7" y="-3.7" width="11" height="7.4" fill="url(#pg243)"/><path d="M12.7 -3.7 L17.4 -1.9 V1.9 L12.7 3.7 Z" fill="#f9b886"/><path d="M12.7 -3.7 L17.4 -1.9 L17.4 -0.2 L12.7 -1 Z" fill="#fdd2a4"/><circle cx="18.0" cy="0" r="2.2" fill="#5a5a5a"/></g></svg>
<div class="t dt" style="left:815.5px;top:937px;">Edit selected</div>
<div class="panel" style="left:1085px;top:686px;width:401px;height:279px;"></div>
<div class="cap" style="left:1086px;top:687px;width:401px;height:26px"></div>
<div class="t capt" style="left:1093.5px;top:692px;">ETH</div>
<div class="mm" style="left:1442px;top:691px"><i style="left:4px;top:10px;width:9px;height:2px;background:#7e7e7e;box-shadow:0 1px 0 rgba(126,126,126,.35)"></i></div>
<div class="mm" style="left:1463px;top:691px"><i style="left:3px;top:4px;width:9px;height:5px;border:1px solid #727272;border-top:3px solid #747474;background:#f2f2f2"></i></div>
<div class="cbox" style="left:1091px;top:713px;width:389px;height:246px"></div>
<div class="tblb" style="left:1092px;top:715px;width:387px;height:210px"></div>
<div class="th" style="left:1093px;top:716px;width:387px"></div>
<div class="t" style="left:1098px;top:723px;width:77px;overflow:hidden;text-overflow:ellipsis;white-space:nowrap;">Bus type</div>
<div class="sep" style="left:1176px;top:716px"></div>
<div class="t" style="left:837px;width:400px;text-align:right;top:723px;">Number</div>
<div class="sep" style="left:1260px;top:716px"></div>
<div class="t" style="left:1266px;top:723px;width:77px;overflow:hidden;text-overflow:ellipsis;white-space:nowrap;">Name</div>
<div class="sep" style="left:1344px;top:716px"></div>
<div class="t" style="left:1350px;top:723px;width:78px;overflow:hidden;text-overflow:ellipsis;white-space:nowrap;">ECU a…</div>
<div class="sep" style="left:1429px;top:716px"></div>
<div class="sep" style="left:1459px;top:716px;background:#b4b4b4"></div>
<div class="sep" style="left:1479px;top:716px;border-right:0;background:#c8c8c8"></div>
<div class="row" style="left:1093px;top:745px;width:367px;height:26px"></div>
<div class="t" style="left:1095.5px;top:751px;">ETH</div>
<div class="t" style="left:858.5px;width:400px;text-align:right;top:751px;">2</div>
<div class="t" style="left:1263.5px;top:751px;">ETH2</div>
<div class="t" style="left:1347.5px;top:751px;">SPA</div>
<svg class="ic" style="left:1436px;top:749px" width="18" height="18" viewBox="0 0 18 18"><defs><linearGradient id="gm268" x1="0.2" y1="0" x2="0.8" y2="1"><stop offset="0" stop-color="#f08680"/><stop offset="1" stop-color="#dc4e48"/></linearGradient><linearGradient id="gn268" x1="0" y1="0" x2="0" y2="1"><stop offset="0" stop-color="#ffb2a2"/><stop offset="0.5" stop-color="#f66e64"/><stop offset="1" stop-color="#ee4e48"/></linearGradient></defs><circle cx="9" cy="9" r="8.9" fill="url(#gm268)"/><circle cx="9" cy="9" r="6.7" fill="url(#gn268)" stroke="#ffd8d2" stroke-opacity="0.75" stroke-width="0.9"/><path d="M5.1 9.4h7.8" stroke="#fff" stroke-width="2.4"/></svg>
<div class="tbar" style="left:1092px;top:927px;width:389px;height:31px"></div>
<div class="btn" style="left:1093px;top:931px;width:92px;height:25px"></div>
<svg class="ic" style="left:1099px;top:936px" width="18" height="18" viewBox="0 0 18 18"><defs><linearGradient id="gp271" x1="0.2" y1="0" x2="0.8" y2="1"><stop offset="0" stop-color="#7ec87a"/><stop offset="1" stop-color="#3f9a3e"/></linearGradient><linearGradient id="gq271" x1="0" y1="0" x2="0" y2="1"><stop offset="0" stop-color="#9ad896"/><stop offset="1" stop-color="#62b65e"/></linearGradient></defs><circle cx="9" cy="9" r="8.9" fill="url(#gp271)"/><circle cx="9" cy="9" r="6.7" fill="url(#gq271)" stroke="#d8f2d4" stroke-opacity="0.75" stroke-width="0.9"/><path d="M9 5.3v7.4M5.3 9h7.4" stroke="#fff" stroke-width="2.5"/></svg>
<div class="t" style="left:1126px;top:937px;">Add ETH</div>
<div class="btn dis" style="left:1188px;top:931px;width:115px;height:25px"></div>
<svg class="ic" style="left:1194px;top:936px" width="20" height="20" viewBox="0 0 20 20"><defs><linearGradient id="pg274" x1="0" y1="0" x2="0" y2="1"><stop offset="0" stop-color="#3fc23a"/><stop offset="0.3" stop-color="#86f266"/><stop offset="0.6" stop-color="#3cc83c"/><stop offset="1" stop-color="#169a1c"/></linearGradient></defs><g opacity="0.42" style="filter:saturate(0.35)" transform="translate(2.0,3.0) rotate(39.6)"><ellipse cx="0.4" cy="0" rx="2.1" ry="3.8" fill="#e9705f"/><ellipse cx="1.7" cy="0" rx="1.3" ry="3.3" fill="#f4f4ec"/><rect x="1.7" y="-3.7" width="11" height="7.4" fill="url(#pg274)"/><path d="M12.7 -3.7 L17.4 -1.9 V1.9 L12.7 3.7 Z" fill="#f9b886"/><path d="M12.7 -3.7 L17.4 -1.9 L17.4 -0.2 L12.7 -1 Z" fill="#fdd2a4"/><circle cx="18.0" cy="0" r="2.2" fill="#5a5a5a"/></g></svg>
<div class="t dt" style="left:1220.5px;top:937px;">Edit selected</div>
<div class="panel" style="left:1492px;top:686px;width:404px;height:279px;"></div>
<div class="cap" style="left:1493px;top:687px;width:404px;height:26px"></div>
<div class="t capt" style="left:1500.5px;top:692px;">LIN</div>
<div class="mm" style="left:1852px;top:691px"><i style="left:4px;top:10px;width:9px;height:2px;background:#7e7e7e;box-shadow:0 1px 0 rgba(126,126,126,.35)"></i></div>
<div class="mm" style="left:1873px;top:691px"><i style="left:3px;top:4px;width:9px;height:5px;border:1px solid #727272;border-top:3px solid #747474;background:#f2f2f2"></i></div>
<div class="cbox" style="left:1498px;top:713px;width:392px;height:246px"></div>
<div class="tblb" style="left:1500px;top:715px;width:389px;height:210px"></div>
<div class="th" style="left:1501px;top:716px;width:389px"></div>
<div class="t" style="left:1506px;top:723px;width:77px;overflow:hidden;text-overflow:ellipsis;white-space:nowrap;">Bus type</div>
<div class="sep" style="left:1584px;top:716px"></div>
<div class="t" style="left:1244px;width:400px;text-align:right;top:723px;">Number</div>
<div class="sep" style="left:1667px;top:716px"></div>
<div class="t" style="left:1673px;top:723px;width:77px;overflow:hidden;text-overflow:ellipsis;white-space:nowrap;">Name</div>
<div class="sep" style="left:1751px;top:716px"></div>
<div class="t" style="left:1757px;top:723px;width:81px;overflow:hidden;text-overflow:ellipsis;white-space:nowrap;">ECU a…</div>
<div class="sep" style="left:1839px;top:716px"></div>
<div class="sep" style="left:1869px;top:716px;background:#b4b4b4"></div>
<div class="sep" style="left:1889px;top:716px;border-right:0;background:#c8c8c8"></div>
<div class="t" style="left:1495.3px;width:400px;text-align:center;top:828px;">No LIN interfaces found.</div>
<div class="tbar" style="left:1499px;top:927px;width:392px;height:31px"></div>
<div class="btn" style="left:1501px;top:931px;width:85px;height:25px"></div>
<svg class="ic" style="left:1507px;top:936px" width="18" height="18" viewBox="0 0 18 18"><defs><linearGradient id="gp297" x1="0.2" y1="0" x2="0.8" y2="1"><stop offset="0" stop-color="#7ec87a"/><stop offset="1" stop-color="#3f9a3e"/></linearGradient><linearGradient id="gq297" x1="0" y1="0" x2="0" y2="1"><stop offset="0" stop-color="#9ad896"/><stop offset="1" stop-color="#62b65e"/></linearGradient></defs><circle cx="9" cy="9" r="8.9" fill="url(#gp297)"/><circle cx="9" cy="9" r="6.7" fill="url(#gq297)" stroke="#d8f2d4" stroke-opacity="0.75" stroke-width="0.9"/><path d="M9 5.3v7.4M5.3 9h7.4" stroke="#fff" stroke-width="2.5"/></svg>
<div class="t" style="left:1533px;top:937px;">Add LIN</div>
<div class="btn dis" style="left:1591px;top:931px;width:114px;height:25px"></div>
<svg class="ic" style="left:1597px;top:936px" width="20" height="20" viewBox="0 0 20 20"><defs><linearGradient id="pg300" x1="0" y1="0" x2="0" y2="1"><stop offset="0" stop-color="#3fc23a"/><stop offset="0.3" stop-color="#86f266"/><stop offset="0.6" stop-color="#3cc83c"/><stop offset="1" stop-color="#169a1c"/></linearGradient></defs><g opacity="0.42" style="filter:saturate(0.35)" transform="translate(2.0,3.0) rotate(39.6)"><ellipse cx="0.4" cy="0" rx="2.1" ry="3.8" fill="#e9705f"/><ellipse cx="1.7" cy="0" rx="1.3" ry="3.3" fill="#f4f4ec"/><rect x="1.7" y="-3.7" width="11" height="7.4" fill="url(#pg300)"/><path d="M12.7 -3.7 L17.4 -1.9 V1.9 L12.7 3.7 Z" fill="#f9b886"/><path d="M12.7 -3.7 L17.4 -1.9 L17.4 -0.2 L12.7 -1 Z" fill="#fdd2a4"/><circle cx="18.0" cy="0" r="2.2" fill="#5a5a5a"/></g></svg>
<div class="t dt" style="left:1623.5px;top:937px;">Edit selected</div>
</body></html>
